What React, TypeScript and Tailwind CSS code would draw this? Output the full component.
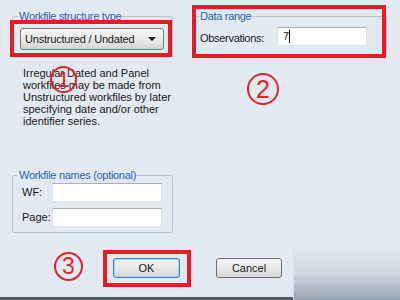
const face =
  'flex h-[20px] items-center rounded-[3px] border bg-gradient-to-b from-[#f4f4f4] via-[#e9e9e9] to-[#d6d6d6] text-[11px] text-[#1a1a1a]';

function GroupBox({ title, className, children }: { title: string; className: string; children: React.ReactNode }) {
  return (
    <div className={`relative rounded-[3px] border border-[#b9c3cf] ${className}`}>
      <span className="absolute -top-[8px] left-[5px] bg-[#e3e9f1] px-[1px] leading-[14px] tracking-[-0.3px] text-[#2c63b6]">
        {title}
      </span>
      {children}
    </div>
  );
}

function Circled({ n, className }: { n: string; className: string }) {
  return (
    <span
      className={`absolute flex items-center justify-center rounded-full border-2 border-[#e2232e] font-['Liberation_Sans',sans-serif] leading-none text-[#e2232e] ${className}`}
    >
      {n}
    </span>
  );
}

export default function App() {
  return (
    <div className="relative flex h-[300px] w-[400px] flex-col overflow-hidden bg-[#e3e9f1] font-['Liberation_Sans',Arial,sans-serif] text-[11px] text-[#1a1a1a]">
      <div className="flex h-[245px]">
        {/* left column */}
        <div className="ml-[12px] w-[161px]">
          <GroupBox title="Workfile structure type" className="mt-[16px] h-[41px] pl-[7px] pt-[11px]">
            <div className={`${face} h-[22px] w-[144px] justify-between border-[#7a7a7a] pl-[4px] pr-[7px]`}>
              <span className="tracking-[-0.2px]">Unstructured / Undated</span>
              <span className="h-0 w-0 border-x-[4px] border-t-[4px] border-x-transparent border-t-black" />
            </div>
          </GroupBox>
          <p className="ml-[11px] mt-[10px] leading-[12px]">
            Irregular Dated and Panel
            <br />
            workfiles may be made from
            <br />
            Unstructured workfiles by later
            <br />
            specifying date and/or other
            <br />
            identifier series.
          </p>
          <GroupBox title="Workfile names (optional)" className="mt-[48px] flex h-[58px] flex-col gap-[6px] pl-[9px] pt-[7px]">
            <div className="flex items-center">
              <span className="w-[30px]">WF:</span>
              <div className="h-[19px] w-[110px] border border-[#dde1e7] border-t-[#a9afb8] bg-white" />
            </div>
            <div className="flex items-center">
              <span className="w-[30px]">Page:</span>
              <div className="h-[19px] w-[110px] border border-[#dde1e7] border-t-[#a9afb8] bg-white" />
            </div>
          </GroupBox>
        </div>

        {/* right column */}
        <div className="ml-[20px] w-[194px]">
          <GroupBox title="Data range" className="mt-[16px] flex h-[40px] items-start pl-[6px] pt-[10px]">
            <span className="mt-[3px] w-[77px] tracking-[-0.3px]">Observations:</span>
            <div className="flex h-[19px] w-[90px] items-center border border-[#dde1e7] border-t-[#a9afb8] bg-white pl-[5px]">
              7<span className="h-[13px] w-px bg-black" />
            </div>
          </GroupBox>
        </div>
      </div>

      {/* bottom row */}
      <div className="flex flex-1">
        <div className="flex w-[293px] items-start gap-[36px] border-b-[3px] border-[#525a63] pl-[113px] pt-[13px]">
          <button className={`${face} w-[67px] justify-center border-[#3d86bd] shadow-[inset_0_0_0_1px_#9fd3f3]`}>OK</button>
          <button className={`${face} w-[66px] justify-center border-[#707070]`}>Cancel</button>
        </div>
        <div className="flex-1 border-l border-[#d6dde6] bg-gradient-to-b from-[#e2e8ef] via-[#d2d9e2] to-[#98a4b1]" />
      </div>

      {/* annotations */}
      <div className="absolute left-[10px] top-[20px] h-[37px] w-[162px] border-4 border-[#e31c25]" />
      <div className="absolute left-[192px] top-[5px] h-[53px] w-[194px] border-4 border-[#e31c25]" />
      <div className="absolute left-[103px] top-[250px] h-[37px] w-[88px] border-4 border-[#e31c25]" />
      <Circled n="1" className="left-[50px] top-[66px] h-[27px] w-[27px] text-[22px]" />
      <Circled n="2" className="left-[247px] top-[73px] h-[32px] w-[32px] text-[25px]" />
      <Circled n="3" className="left-[54px] top-[252px] h-[29px] w-[29px] text-[23px]" />
    </div>
  );
}
